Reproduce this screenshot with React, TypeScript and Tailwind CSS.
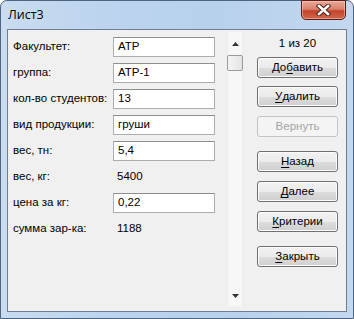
import React from "react";

const font = { fontFamily: '"Liberation Sans", Arial, sans-serif' };

function Field({ label, value, input = true }: { label: string; value: string; input?: boolean }) {
  return (
    <div className="flex items-center h-[20px]">
      <div className="w-[100px] text-[11.5px] text-black leading-none">{label}</div>
      {input ? (
        <div className="w-[102px] h-[20px] bg-white border border-[#abadb3] border-t-[#8e8f8f] flex items-center pl-[4px] text-[11.5px] text-black">
          {value}
        </div>
      ) : (
        <div className="pl-[4px] text-[11.5px] text-black">{value}</div>
      )}
    </div>
  );
}

function Btn({ children, disabled, className = "" }: { children: React.ReactNode; disabled?: boolean; className?: string }) {
  return (
    <div
      className={
        "w-[81px] h-[21px] rounded-[3px] border flex items-center justify-center text-[11.5px] " +
        (disabled
          ? "border-[#c2c4c6] bg-[#f4f4f4] text-[#a3a3a3] "
          : "border-[#707070] bg-[linear-gradient(#f2f2f2_0%,#ebebeb_50%,#dddddd_51%,#cfcfcf_100%)] text-black shadow-[inset_0_0_0_1px_#fcfcfc] ") +
        className
      }
    >
      {children}
    </div>
  );
}

const U = ({ c }: { c: string }) => <span className="underline underline-offset-[2px]">{c}</span>;

export default function App() {
  return (
    <div className="w-[354px] h-[319px] bg-white" style={font}>
      <div className="relative w-[354px] h-[319px] rounded-t-[7px] border border-[#4d6580] bg-[linear-gradient(90deg,#c9dcf0_0%,#bcd4ee_30%,#b7d0ec_60%,#c3d8ef_100%)] flex flex-col">
        <div className="h-[28px] flex items-start">
          <div className="pl-[7px] pt-[5px] text-[12.5px] text-black" style={{ fontFamily: '"Open Sans", "Liberation Sans", sans-serif' }}>
            Лист3
          </div>
          <div className="absolute right-[7px] top-[-1px] w-[45px] h-[20px] rounded-b-[5px] border border-[#5b1d16] bg-[linear-gradient(#e9a898_0%,#d9836d_45%,#c4432a_55%,#d0694d_100%)] shadow-[inset_0_0_0_1px_rgba(255,210,200,0.5)] flex items-center justify-center">
            <svg width="15" height="12" viewBox="0 0 15 12">
              <path d="M3 2 L12 10 M12 2 L3 10" stroke="#4a1c14" strokeWidth="4.4" strokeLinecap="square" />
              <path d="M3 2 L12 10 M12 2 L3 10" stroke="#ffffff" strokeWidth="2.6" strokeLinecap="square" />
            </svg>
          </div>
        </div>
        <div className="mx-[6px] h-[283px] border border-[#6c7f95] bg-[#f0f0f0] flex">
          <div className="w-[219px] pl-[5px] pt-[7px] flex flex-col gap-[6px]">
            <Field label="Факультет:" value="АТР" />
            <Field label="группа:" value="АТР-1" />
            <Field label="кол-во студентов:" value="13" />
            <Field label="вид продукции:" value="груши" />
            <Field label="вес, тн:" value="5,4" />
            <Field label="вес, кг:" value="5400" input={false} />
            <Field label="цена за кг:" value="0,22" />
            <Field label="сумма зар-ка:" value="1188" input={false} />
          </div>
          <div className="mt-[2px] w-[16px] h-[274px] bg-[#f7f7f7] border-x border-[#ececec] flex flex-col items-center">
            <div className="h-[23px] flex items-center justify-center">
              <svg width="7" height="4" viewBox="0 0 7 4"><path d="M3.5 0 L7 4 L0 4 Z" fill="#333" /></svg>
            </div>
            <div className="w-[16px] h-[16px] rounded-[2px] border border-[#9a9a9a] bg-[linear-gradient(90deg,#f4f4f4,#e4e4e4)]" />
            <div className="flex-1" />
            <div className="h-[20px] flex items-center justify-center">
              <svg width="7" height="4" viewBox="0 0 7 4"><path d="M0 0 L7 0 L3.5 4 Z" fill="#333" /></svg>
            </div>
          </div>
          <div className="ml-[14px] flex flex-col items-center">
            <div className="h-[27px] pt-[8px] text-[11.5px] text-black leading-none">1 из 20</div>
            <Btn>
              До<U c="б" />авить
            </Btn>
            <Btn className="mt-[8px]">
              <U c="У" />далить
            </Btn>
            <Btn className="mt-[9px]" disabled>
              Вернуть
            </Btn>
            <Btn className="mt-[14px]">
              <U c="Н" />азад
            </Btn>
            <Btn className="mt-[9px]">
              <U c="Д" />алее
            </Btn>
            <Btn className="mt-[9px]">
              <U c="К" />ритерии
            </Btn>
            <Btn className="mt-[14px]">
              <U c="З" />акрыть
            </Btn>
          </div>
        </div>
      </div>
    </div>
  );
}
